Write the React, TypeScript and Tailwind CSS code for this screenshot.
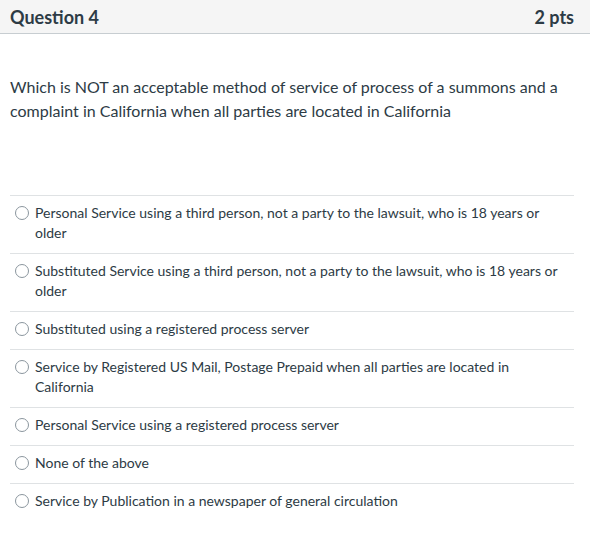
const answers = [
  "Personal Service using a third person, not a party to the lawsuit, who is 18 years or older",
  "Substituted Service using a third person, not a party to the lawsuit, who is 18 years or older",
  "Substituted using a registered process server",
  "Service by Registered US Mail, Postage Prepaid when all parties are located in California",
  "Personal Service using a registered process server",
  "None of the above",
  "Service by Publication in a newspaper of general circulation",
];

export default function App() {
  return (
    <div className="min-h-[535px] w-[590px] bg-white text-[#2d3b45]" style={{ fontFamily: "Lato, 'Open Sans', sans-serif" }}>
      <div className="box-border flex h-[34px] items-center justify-between border-b border-[#c7cdd1] bg-[#f5f5f5] pl-[10px] pr-[16px]">
        <h2 className="text-[18px] font-bold leading-none">Question 4</h2>
        <div className="text-[18px] font-bold leading-none">2 pts</div>
      </div>

      <div className="pl-[10px] pr-[16px] pt-[41px]">
        <p className="text-[16px] leading-[24px]">
          Which is NOT an acceptable method of service of process of a summons and a complaint in California when all parties are located in California
        </p>
      </div>

      <div className="ml-[10px] mr-[16px] mt-[72px]">
        {answers.map((a) => (
          <label key={a} className="flex items-start border-t border-[#dfe2e4] pb-[10px] pl-[5px] pr-[10px] pt-[7px]">
            <span className="mr-[6px] mt-[3px] h-[14px] w-[14px] shrink-0 rounded-full border border-[#8b969e] bg-white" />
            <span className="text-[14px] leading-[20px]">{a}</span>
          </label>
        ))}
      </div>
    </div>
  );
}
